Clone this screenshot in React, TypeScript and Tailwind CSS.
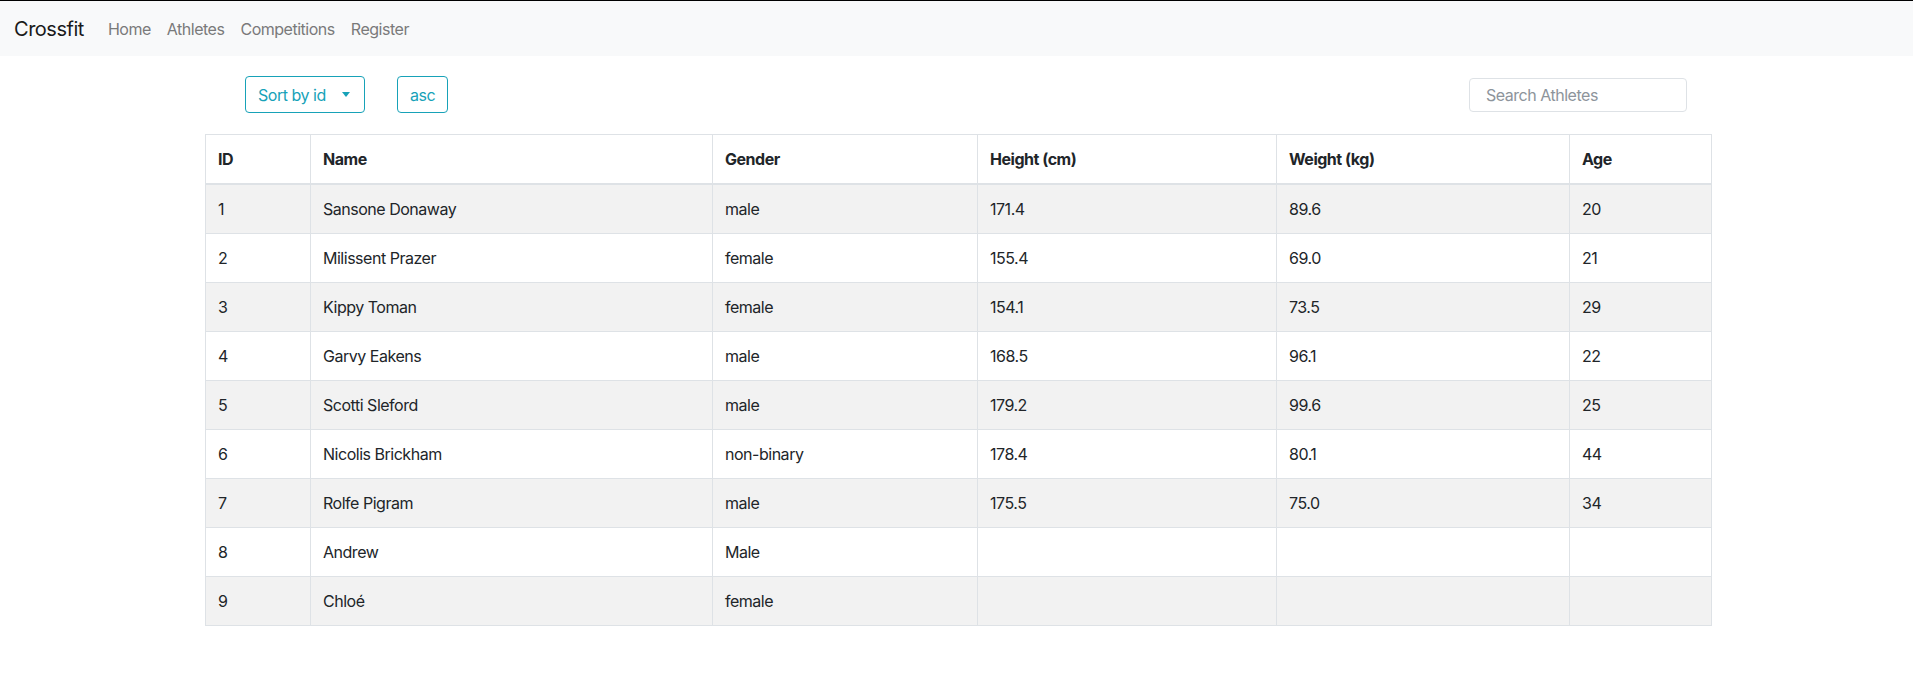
import React, { useState } from 'react';

interface Athlete {
  id: number;
  name: string;
  gender: string;
  height?: string;
  weight?: string;
  age?: number;
}

const athletes: Athlete[] = [
  { id: 1, name: 'Sansone Donaway', gender: 'male', height: '171.4', weight: '89.6', age: 20 },
  { id: 2, name: 'Milissent Prazer', gender: 'female', height: '155.4', weight: '69.0', age: 21 },
  { id: 3, name: 'Kippy Toman', gender: 'female', height: '154.1', weight: '73.5', age: 29 },
  { id: 4, name: 'Garvy Eakens', gender: 'male', height: '168.5', weight: '96.1', age: 22 },
  { id: 5, name: 'Scotti Sleford', gender: 'male', height: '179.2', weight: '99.6', age: 25 },
  { id: 6, name: 'Nicolis Brickham', gender: 'non-binary', height: '178.4', weight: '80.1', age: 44 },
  { id: 7, name: 'Rolfe Pigram', gender: 'male', height: '175.5', weight: '75.0', age: 34 },
  { id: 8, name: 'Andrew', gender: 'Male' },
  { id: 9, name: 'Chloé', gender: 'female' },
];

const columns = [
  { label: 'ID', width: 'w-[105px]' },
  { label: 'Name', width: 'w-[402px]' },
  { label: 'Gender', width: 'w-[265px]' },
  { label: 'Height (cm)', width: 'w-[299px]' },
  { label: 'Weight (kg)', width: 'w-[293px]' },
  { label: 'Age', width: 'w-[142px]' },
];

export default function App() {
  const [search, setSearch] = useState('');

  return (
    <div className="min-h-screen bg-white text-[#212529] tracking-[-0.03em] font-['Inter','Liberation_Sans',sans-serif]">
      {/* Navbar */}
      <nav className="h-[56px] bg-[#f8f9fa] border-t border-black flex items-center px-[14px]">
        <span className="text-[20px] mr-4 text-[#1a1a1a]">Crossfit</span>
        <div className="flex items-center text-[16px] text-[#7a7a7a]">
          <a className="px-2">Home</a>
          <a className="px-2">Athletes</a>
          <a className="px-2">Competitions</a>
          <a className="px-2">Register</a>
        </div>
      </nav>

      <div className="w-[1506px] ml-[205px]">
        {/* Controls */}
        <div className="flex items-center justify-between mt-[20px] pl-[40px] pr-[24px]">
          <div className="flex items-center gap-8">
            <button className="h-[37px] w-[120px] flex items-center pl-3 border border-[#17a2b8] rounded text-[#17a2b8] text-[16px]">
              Sort by id
              <span className="ml-4 w-0 h-0 border-x-[4px] border-x-transparent border-t-[5px] border-t-[#17a2b8]" />
            </button>
            <button className="h-[37px] w-[51px] border border-[#17a2b8] rounded text-[#17a2b8] text-[16px]">
              asc
            </button>
          </div>
          <input
            value={search}
            onChange={(e) => setSearch(e.target.value)}
            placeholder="Search Athletes"
            className="h-[34px] w-[218px] border border-[#dee2e6] rounded px-4 text-[16px] placeholder-[#8d949b] outline-none"
          />
        </div>

        {/* Table */}
        <table className="mt-[21px] w-full border-collapse border border-[#dee2e6] text-[16px] table-fixed">
          <thead>
            <tr className="border-b-2 border-[#dee2e6]">
              {columns.map((c) => (
                <th key={c.label} className={`${c.width} border border-[#dee2e6] px-3 py-3 text-left font-bold leading-6`}>
                  {c.label}
                </th>
              ))}
            </tr>
          </thead>
          <tbody>
            {athletes.map((a, i) => (
              <tr key={a.id} className={i % 2 === 0 ? 'bg-[#f2f2f2]' : 'bg-white'}>
                <td className="border border-[#dee2e6] px-3 py-3 leading-6">{a.id}</td>
                <td className="border border-[#dee2e6] px-3 py-3 leading-6">{a.name}</td>
                <td className="border border-[#dee2e6] px-3 py-3 leading-6">{a.gender}</td>
                <td className="border border-[#dee2e6] px-3 py-3 leading-6">{a.height}</td>
                <td className="border border-[#dee2e6] px-3 py-3 leading-6">{a.weight}</td>
                <td className="border border-[#dee2e6] px-3 py-3 leading-6">{a.age}</td>
              </tr>
            ))}
          </tbody>
        </table>
      </div>
    </div>
  );
}
